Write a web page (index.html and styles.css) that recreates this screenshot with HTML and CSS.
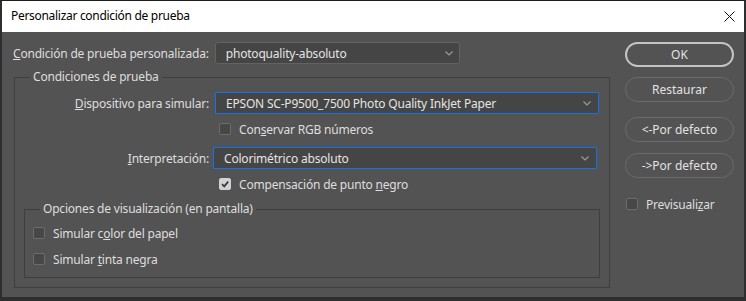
FILE: index.html
```html
<!DOCTYPE html>
<html lang="es">
<head>
    <meta charset="UTF-8">
    <title>Personalizar condición de prueba</title>
    <link rel="stylesheet" href="styles.css">
</head>
<body>
    <div class="dialog">
        <div class="titlebar">
            <span class="title">Personalizar condición de prueba</span>
            <svg class="close" width="11" height="11" viewBox="0 0 11 11">
                <path d="M0.5 0.5 L10.5 10.5 M10.5 0.5 L0.5 10.5" stroke="#111" stroke-width="1" fill="none"/>
            </svg>
        </div>

        <div class="content">
            <div class="main">
                <div class="preset-row">
                    <span class="label"><u>C</u>ondición de prueba personalizada:</span>
                    <div class="select preset">
                        <span>photoquality-absoluto</span>
                        <svg class="chevron" width="8" height="5" viewBox="0 0 8 5"><path d="M0.5 0.5 L4 4 L7.5 0.5" stroke="#9a9a9a" stroke-width="1.2" fill="none"/></svg>
                    </div>
                </div>

                <fieldset class="group outer">
                    <legend>Condiciones de prueba</legend>

                    <div class="form-row">
                        <span class="label right"><u>D</u>ispositivo para simular:</span>
                        <div class="select focused">
                            <span>EPSON SC-P9500_7500 Photo Quality InkJet Paper</span>
                            <svg class="chevron" width="8" height="5" viewBox="0 0 8 5"><path d="M0.5 0.5 L4 4 L7.5 0.5" stroke="#9a9a9a" stroke-width="1.2" fill="none"/></svg>
                        </div>
                    </div>
                    <div class="form-row check-row">
                        <span class="spacer"></span>
                        <label class="check"><span class="box"></span><span>Con<u>s</u>ervar RGB números</span></label>
                    </div>

                    <div class="form-row">
                        <span class="label right"><u>I</u>nterpretación:</span>
                        <div class="select focused intent">
                            <span>Colorimétrico absoluto</span>
                            <svg class="chevron" width="8" height="5" viewBox="0 0 8 5"><path d="M0.5 0.5 L4 4 L7.5 0.5" stroke="#9a9a9a" stroke-width="1.2" fill="none"/></svg>
                        </div>
                    </div>
                    <div class="form-row check-row">
                        <span class="spacer"></span>
                        <label class="check"><span class="box checked">
                            <svg width="10" height="10" viewBox="0 0 10 10"><path d="M2 5.2 L4.2 7.4 L8.2 2.6" stroke="#3a3a3a" stroke-width="1.7" fill="none"/></svg>
                        </span><span>Compensación de punto <u>n</u>egro</span></label>
                    </div>

                    <fieldset class="group inner">
                        <legend>Opciones de visualización (en pantalla)</legend>
                        <label class="check"><span class="box"></span><span>Simular c<u>o</u>lor del papel</span></label>
                        <label class="check second"><span class="box"></span><span>Simular <u>t</u>inta negra</span></label>
                    </fieldset>
                </fieldset>
            </div>

            <div class="side">
                <button class="btn primary">OK</button>
                <button class="btn">Restaurar</button>
                <button class="btn spaced">&lt;-Por defecto</button>
                <button class="btn">-&gt;Por defecto</button>
                <label class="check preview"><span class="box"></span><span>Previsuali<u>z</u>ar</span></label>
            </div>
        </div>
    </div>
</body>
</html>
```

FILE: styles.css
```css
body {
    margin: 0;
    background-color: #2b2b2b;
    font-family: "Noto Sans", "Open Sans", sans-serif;
    font-size: 12px;
    letter-spacing: -0.2px;
}
.dialog {
    width: 746px;
    height: 301px;
    box-sizing: border-box;
    border-top: 1px solid #1c1c1c;
    border-left: 2px solid #2e2e2e;
    border-right: 2px solid #2e2e2e;
    border-bottom: 4px solid #2e2e2e;
    background-color: #535353;
    color: #dedede;
}
.titlebar {
    height: 31px;
    background-color: #ffffff;
    color: #000;
    display: flex;
    align-items: center;
    justify-content: space-between;
    padding: 0 9px 0 9px;
}
.title {
    font-size: 12px;
    letter-spacing: -0.3px;
    margin-top: -2px;
}
.close {
    margin-top: -1px;
}
.content {
    display: flex;
}
.main {
    width: 608px;
}
.preset-row {
    display: flex;
    align-items: center;
    margin: 10px 0 0 11px;
    gap: 6px;
}
.label {
    white-space: nowrap;
}
.label.right {
    width: 185px;
    text-align: right;
}
.select {
    height: 22px;
    box-sizing: border-box;
    background-color: #454545;
    border: 1px solid #626262;
    border-radius: 3px;
    display: flex;
    align-items: center;
    justify-content: space-between;
    padding: 0 6px 0 10px;
    color: #e4e4e4;
}
.select.preset {
    width: 245px;
}
.select.focused {
    width: 384px;
    border-color: #1473e6;
    border-radius: 1px;
    padding-right: 7px;
}
.select.intent {
    margin-left: -2px;
}
.group {
    margin: 0;
    border: 1px solid #3f3f3f;
    box-sizing: border-box;
}
.group legend {
    padding: 0 3px;
    line-height: 14px;
}
.outer {
    margin: 6px 0 0 12px;
    width: 596px;
    height: 218px;
    padding: 8px 9px 0 9px;
}
.outer > legend {
    margin-left: 6px;
}
.form-row {
    display: flex;
    align-items: center;
    gap: 6px;
}
.form-row.check-row {
    margin: 8px 0 11px 0;
}
.form-row.check-row:last-of-type {
    margin-bottom: 0;
}
.spacer {
    width: 185px;
}
.check {
    display: flex;
    align-items: center;
    gap: 8px;
    height: 14px;
    white-space: nowrap;
}
.form-row .check {
    margin-left: 4px;
}
.box {
    width: 12px;
    height: 12px;
    box-sizing: border-box;
    border: 1px solid #6c6c6c;
    border-radius: 2px;
    background-color: #474747;
    display: flex;
    align-items: center;
    justify-content: center;
}
.box.checked {
    background-color: #d2d2d2;
    border-color: #d2d2d2;
}
.inner {
    margin-top: 11px;
    width: 576px;
    height: 76px;
    padding: 10px 8px 0 8px;
}
.inner > legend {
    margin-left: 7px;
}
.check.second {
    margin-top: 12px;
}
.side {
    margin-left: 15px;
    padding-top: 10px;
    display: flex;
    flex-direction: column;
    width: 109px;
}
.btn {
    height: 25px;
    border: 1px solid #6a6a6a;
    border-radius: 13px;
    background-color: #535353;
    color: #e2e2e2;
    font-family: inherit;
    font-size: 12px;
    letter-spacing: 0;
    padding: 0;
    margin-bottom: 10px;
}
.btn.primary {
    border: 2px solid #c4c4c4;
}
.btn.spaced {
    margin-top: 5px;
    margin-bottom: 11px;
}
.check.preview {
    margin: 9px 0 0 1px;
}
```
